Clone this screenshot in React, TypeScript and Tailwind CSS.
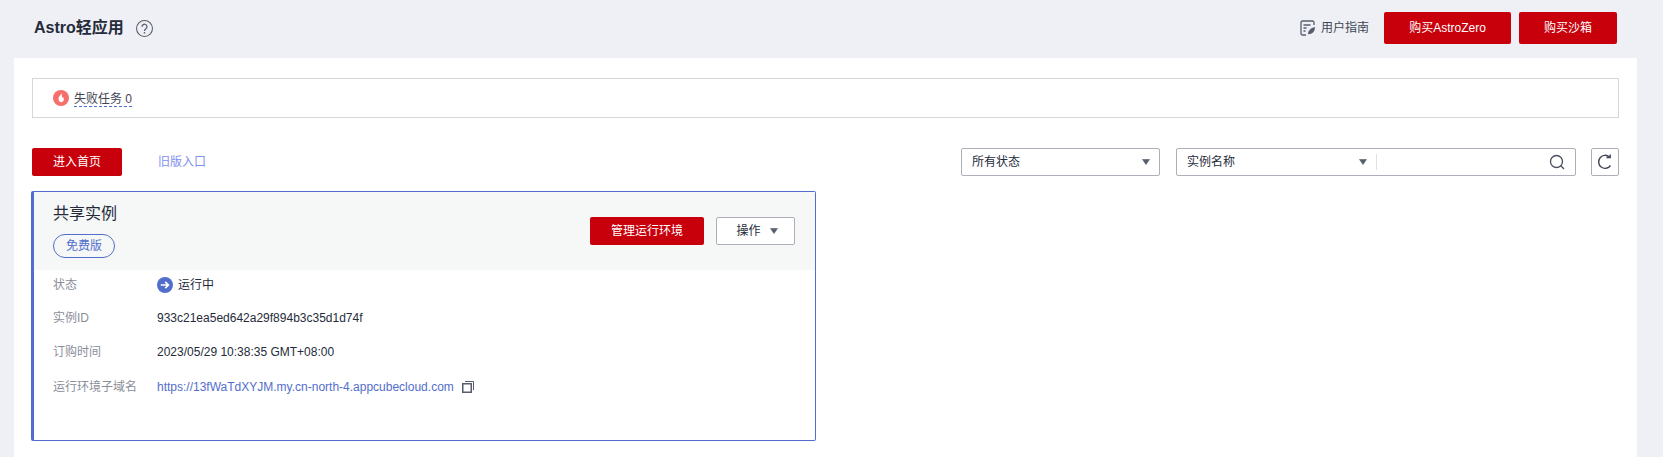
const font = "font-['Liberation_Sans','Noto_Sans_CJK_SC',sans-serif]";

function Caret({ className = "" }: { className?: string }) {
  return (
    <svg width="10" height="6" viewBox="0 0 10 6" className={className}>
      <path d="M1.500 0.500h7L5 5.500z" fill="#575d6c" stroke="#575d6c" strokeWidth="0.600" />
    </svg>
  );
}

function GuideIcon() {
  return (
    <svg width="16" height="16" viewBox="0 0 16 16" fill="none" stroke="#575d6c" strokeWidth="1.300">
      <path d="M6 15H2.500a1.500 1.500 0 0 1-1.500-1.500v-11A1.500 1.500 0 0 1 2.500 1h10A1.500 1.500 0 0 1 14 2.500V5" />
      <path d="M3.500 5h7M3.500 8h3M3.500 11h2" />
      <path d="M8 14.500c0-4 2.500-6.500 7-7.500 0 4.500-2.500 7-6 7z" fill="#575d6c" stroke="none" />
    </svg>
  );
}

function FireIcon() {
  return (
    <svg width="16" height="16" viewBox="0 0 16 16">
      <circle cx="8" cy="8" r="8" fill="#f66f6a" />
      <path d="M8.300 2.800c.3 2-2.800 3.500-2.800 6.300 0 1.700 1.200 3.100 2.700 3.100s2.600-1.300 2.600-2.900c0-1.100-.5-2-1-2.600-.1.7-.4 1.100-.8 1.300.2-1.900-.2-3.800-.7-5.200z" fill="#fff" />
    </svg>
  );
}

function RunningIcon() {
  return (
    <svg width="16" height="16" viewBox="0 0 16 16" fill="none">
      <circle cx="8" cy="8" r="8" fill="#526ecc" />
      <path d="M3.800 8h7.400M8.200 4.800 11.400 8l-3.200 3.200" stroke="#fff" strokeWidth="1.700" />
    </svg>
  );
}

function CopyIcon() {
  return (
    <svg width="12" height="12" viewBox="0 0 12 12" fill="none" stroke="#575d6c">
      <rect x="0.750" y="2.750" width="8.500" height="8.500" strokeWidth="1.500" />
      <path d="M3 .5h8.500V9" strokeWidth="1" />
    </svg>
  );
}

function SearchIcon() {
  return (
    <svg width="16" height="16" viewBox="0 0 16 16" fill="none" stroke="#4a505e" strokeWidth="1.300">
      <circle cx="7.500" cy="7.500" r="6" />
      <path d="m11.800 11.800 3.200 3.200" />
    </svg>
  );
}

function RefreshIcon() {
  return (
    <svg width="16" height="16" viewBox="0 0 16 16" fill="none" stroke="#3f4554" strokeWidth="1.400">
      <path d="M13.500 11.500A6.500 6.500 0 1 1 12.500 3" />
      <path d="M9.500 3.500h3.700V.5" />
    </svg>
  );
}

function HelpIcon() {
  return (
    <svg width="17" height="17" viewBox="0 0 16 16" fill="none" stroke="#575d6c" strokeWidth="1">
      <circle cx="8" cy="8" r="7.500" />
      <path d="M5.700 6.300A2.300 2.300 0 1 1 9.300 8.200C8.400 8.800 8 9.200 8 10.300" strokeWidth="1.200" />
      <circle cx="8" cy="12" r="0.800" fill="#575d6c" stroke="none" />
    </svg>
  );
}

const rows = [
  { label: "实例ID", value: "933c21ea5ed642a29f894b3c35d1d74f" },
  { label: "订购时间", value: "2023/05/29 10:38:35 GMT+08:00" },
];

export default function App() {
  return (
    <div className={`${font} h-[457px] overflow-hidden bg-[#eef0f5] text-xs text-[#252b3a]`}>
      {/* Header */}
      <div className="flex h-[58px] items-start justify-between pl-[34px] pr-[46px] pt-3">
        <div className="flex h-[32px] items-center">
          <h1 className="text-base font-bold leading-none text-[#252b3a]">Astro轻应用</h1>
          <span className="ml-3 flex"><HelpIcon /></span>
        </div>
        <div className="flex items-center">
          <GuideIcon />
          <span className="ml-[5px] text-[#3f4554]">用户指南</span>
          <button className="ml-[15px] h-8 w-[127px] rounded-[2px] bg-[#c7000b] text-white">购买AstroZero</button>
          <button className="ml-2 h-8 w-[98px] rounded-[2px] bg-[#c7000b] text-white">购买沙箱</button>
        </div>
      </div>

      {/* Main panel */}
      <div className="ml-[14px] mr-[26px] h-[399px] bg-white px-[18px] pt-5">
        <div className="flex h-10 items-center border border-[#d4d6da] pl-5">
          <FireIcon />
          <span className="ml-[5px] mt-[3px] border-b border-dashed border-[#526ecc] leading-[14px] text-[#3f4554]">失败任务 0</span>
        </div>

        <div className="mt-[30px] flex h-7 items-center">
          <button className="h-7 w-[90px] rounded-[2px] bg-[#c7000b] text-white">进入首页</button>
          <a className="ml-9 text-[#7f8ff0]">旧版入口</a>
          <div className="ml-auto flex items-center">
            <div className="flex h-7 w-[199px] items-center justify-between rounded-[2px] border border-[#adb0b8] pl-[10px] pr-[8px] text-[#252b3a]">
              <span>所有状态</span>
              <Caret />
            </div>
            <div className="ml-4 flex h-7 w-[400px] items-center rounded-[2px] border border-[#adb0b8] pl-[10px] pr-[10px] text-[#252b3a]">
              <span>实例名称</span>
              <Caret className="ml-auto" />
              <span className="ml-[8px] h-4 w-px bg-[#dfe1e6]" />
              <span className="ml-[172px] flex"><SearchIcon /></span>
            </div>
            <button className="ml-[15px] flex h-7 w-[28px] items-center justify-center rounded-[2px] border border-[#adb0b8]">
              <RefreshIcon />
            </button>
          </div>
        </div>

        {/* Instance card */}
        <div className="-ml-px mt-[15px] h-[250px] w-[785px] rounded-[2px] border border-l-[3px] border-[#526ecc]">
          <div className="flex h-[78px] justify-between bg-[#f6f7f7] pl-[19px] pr-[20px]">
            <div className="pt-[11px]">
              <div className="text-base leading-[22px] text-[#252b3a]">共享实例</div>
              <span className="mt-[9px] flex h-6 w-[62px] items-center justify-center rounded-full border border-[#526ecc] text-[#526ecc]">免费版</span>
            </div>
            <div className="flex pt-[25px]">
              <button className="h-7 w-[114px] rounded-[2px] bg-[#c7000b] text-white">管理运行环境</button>
              <button className="ml-3 flex h-7 w-[79px] items-center justify-center rounded-[2px] border border-[#adb0b8] bg-white pl-1 text-[#252b3a]">
                操作
                <Caret className="ml-2" />
              </button>
            </div>
          </div>

          <div className="pl-[19px] pt-[2px]">
            <div className="flex h-[26px] items-center">
              <span className="w-[104px] text-[#8a8e99]">状态</span>
              <RunningIcon />
              <span className="ml-[5px] text-[#252b3a]">运行中</span>
            </div>
            {rows.map((row, i) => (
              <div key={row.label} className={`flex h-[26px] items-center ${i === 0 ? "mt-[7px]" : "mt-[8px]"}`}>
                <span className="w-[104px] text-[#8a8e99]">{row.label}</span>
                <span className="text-[#252b3a]">{row.value}</span>
              </div>
            ))}
            <div className="mt-[9px] flex h-[26px] items-center">
              <span className="w-[104px] text-[#8a8e99]">运行环境子域名</span>
              <a className="text-[#526ecc]">https://13fWaTdXYJM.my.cn-north-4.appcubecloud.com</a>
              <span className="ml-2 flex"><CopyIcon /></span>
            </div>
          </div>
        </div>
      </div>
    </div>
  );
}
